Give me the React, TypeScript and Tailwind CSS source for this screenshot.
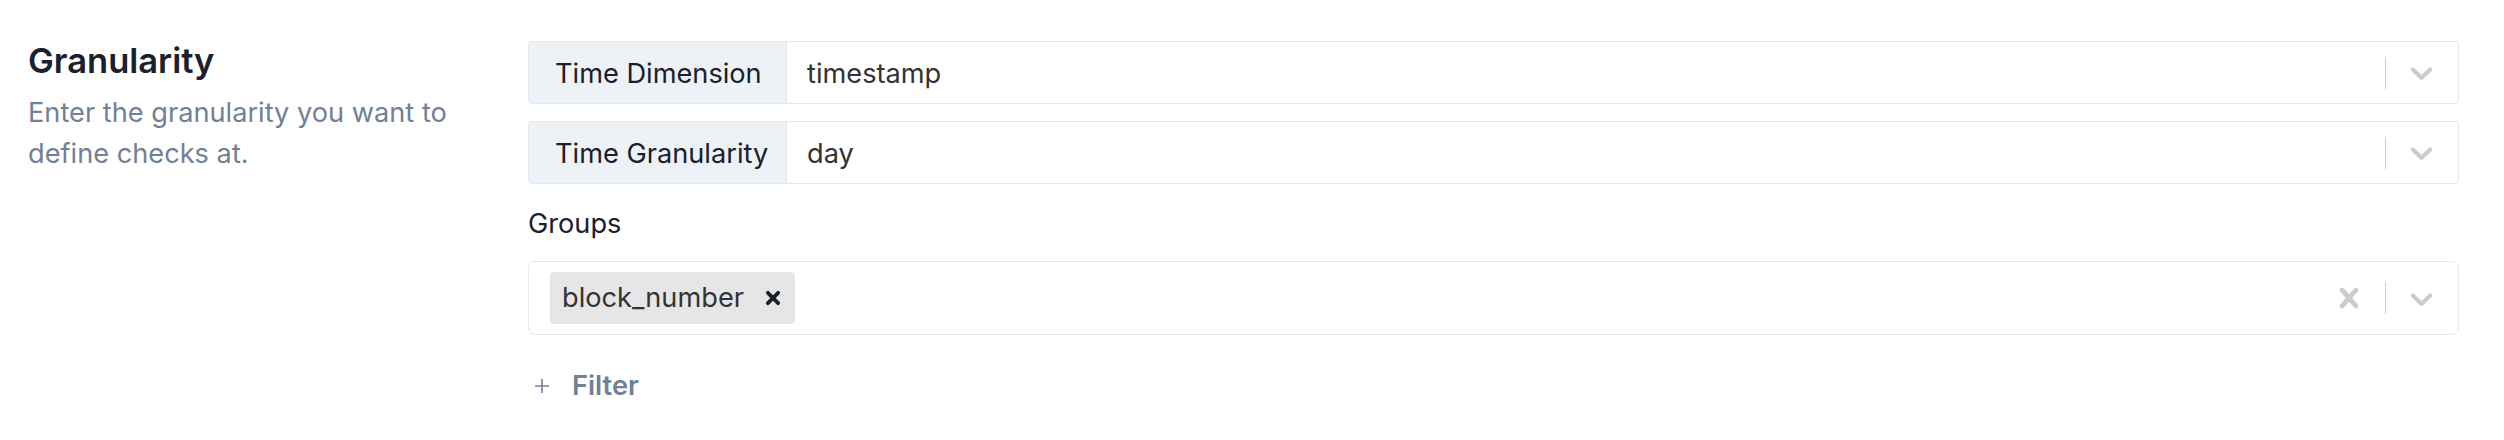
import { Plus } from 'lucide-react'

const CHEVRON =
    'M4.516 7.548c0.436-0.446 1.043-0.481 1.576 0l3.908 3.747 3.908-3.747c0.533-0.481 1.141-0.446 1.574 0 0.436 0.445 0.408 1.197 0 1.615-0.406 0.418-4.695 4.502-4.695 4.502-0.217 0.223-0.502 0.335-0.787 0.335s-0.57-0.112-0.789-0.335c0 0-4.287-4.084-4.695-4.502s-0.436-1.17 0-1.615z'
const CROSS =
    'M14.348 14.849c-0.469 0.469-1.229 0.469-1.697 0l-2.651-3.030-2.651 3.029c-0.469 0.469-1.229 0.469-1.697 0-0.469-0.469-0.469-1.229 0-1.697l2.758-3.15-2.759-3.152c-0.469-0.469-0.469-1.228 0-1.697s1.228-0.469 1.697 0l2.652 3.031 2.651-3.031c0.469-0.469 1.228-0.469 1.697 0s0.469 1.229 0 1.697l-2.758 3.152 2.758 3.15c0.469 0.469 0.469 1.229 0 1.698z'

function Chevron() {
    return (
        <svg viewBox="0 0 20 20" className="w-[37px] h-[37px] fill-[#cccccc]">
            <path d={CHEVRON} />
        </svg>
    )
}

function Separator() {
    return <span className="w-px h-[32px] bg-[#cccccc]" />
}

function Indicators({ clearable }: { clearable?: boolean }) {
    return (
        <div className="flex items-center h-full">
            {clearable && (
                <svg viewBox="0 0 20 20" className="w-[40px] h-[40px] fill-[#cccccc] mr-[16px]">
                    <path d={CROSS} />
                </svg>
            )}
            <Separator />
            <div className="ml-[17px] mr-[18px] flex items-center">
                <Chevron />
            </div>
        </div>
    )
}

function AddonSelect({ label, value }: { label: string; value: string }) {
    return (
        <div className="flex h-[63px] w-full">
            <div className="w-[259px] shrink-0 flex items-center pl-[26px] pt-[2px] bg-[#edf2f7] border border-[#e2e8f0] rounded-l-[4px] text-[#1a202c]">
                {label}
            </div>
            <div className="flex-1 flex items-center justify-between bg-white border border-l-0 border-[#e2e8f0] rounded-r-[4px]">
                <span className="pl-[20px] pt-[2px] text-[#333333]">{value}</span>
                <Indicators />
            </div>
        </div>
    )
}

export default function App() {
    return (
        <main
            className="flex bg-white min-h-[440px] pl-[28px] pr-[45px] text-[27.2px] leading-[38px]"
            style={{ fontFamily: 'Inter, "Noto Sans", sans-serif' }}
        >
            {/* Left: title + help */}
            <div className="w-[500px] shrink-0 pt-[39px]">
                <h2 className="text-[34.5px] leading-[43px] font-semibold text-[#1a202c]">Granularity</h2>
                <p className="mt-[10px] max-w-[450px] leading-[41px] text-[#718096]">
                    Enter the granularity you want to define checks at.
                </p>
            </div>

            {/* Right: form */}
            <div className="flex-1 pt-[41px] flex flex-col">
                <AddonSelect label="Time Dimension" value="timestamp" />
                <div className="mt-[17px]">
                    <AddonSelect label="Time Granularity" value="day" />
                </div>

                <div className="mt-[21px] text-[#1a202c]">Groups</div>

                <div className="mt-[18px] h-[74px] flex items-center justify-between border border-[#e2e8f0] rounded-[7px] bg-white">
                    <div className="pl-[21px] flex items-center">
                        <span className="h-[52px] flex items-center bg-[#e6e6e6] rounded-[4px] pl-[12px] pr-[14px] text-[#333333]">
                            block_number
                            <svg viewBox="0 0 14 14" className="ml-[21px] w-[16px] h-[16px]">
                                <path d="M2.5 2.5 L11.5 11.5 M11.5 2.5 L2.5 11.5" stroke="#1a202c" strokeWidth="3.3" strokeLinecap="round" />
                            </svg>
                        </span>
                    </div>
                    <Indicators clearable />
                </div>

                <button className="mt-[32px] self-start flex items-center text-[#718096] font-semibold">
                    <Plus size={22} strokeWidth={1.75} className="ml-[3px] mr-[19px]" />
                    Filter
                </button>
            </div>
        </main>
    )
}
